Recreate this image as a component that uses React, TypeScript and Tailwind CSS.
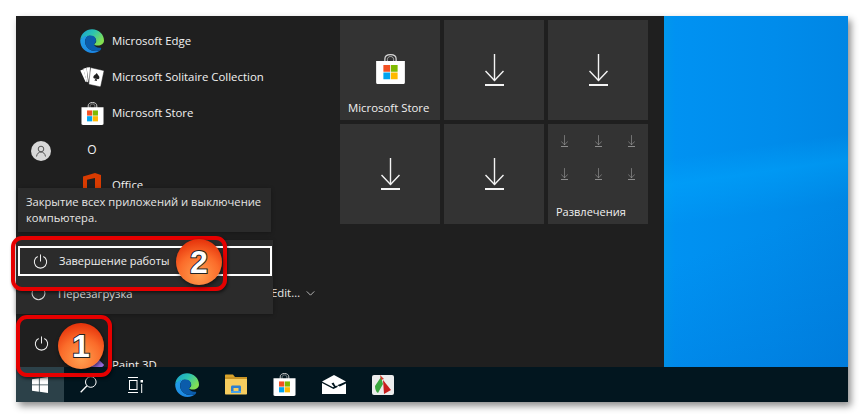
import React from "react";

const font = { fontFamily: '"Open Sans", "Noto Sans", sans-serif' };

function Power({ className = "" }: { className?: string }) {
  return (
    <svg viewBox="0 0 16 16" className={className} fill="none" stroke="currentColor" strokeWidth="1.1">
      <path d="M5 2.6A6.6 6.6 0 1 0 11 2.6" />
      <path d="M8 .5V8" />
    </svg>
  );
}

function Arrow({ className = "" }: { className?: string }) {
  return (
    <svg viewBox="0 0 19 32" className={className} fill="none" stroke="currentColor">
      <path d="M9.5 0V26.5" strokeWidth="1.4" />
      <path d="M.5 17L9.5 26.5L18.5 17" strokeWidth="1.4" />
      <path d="M0 31H19" strokeWidth="2" />
    </svg>
  );
}

function Edge({ id, className = "" }: { id: string; className?: string }) {
  return (
    <svg viewBox="0 0 24 24" className={className}>
      <defs>
        <linearGradient id={id + "a"} x1="0" y1="0" x2="1" y2="0.6">
          <stop offset="0" stopColor="#159ad6" />
          <stop offset="0.5" stopColor="#2cc4b0" />
          <stop offset="1" stopColor="#84e050" />
        </linearGradient>
        <linearGradient id={id + "b"} x1="0" y1="0" x2="1" y2="1">
          <stop offset="0" stopColor="#22a0e8" />
          <stop offset="1" stopColor="#1a7ee0" />
        </linearGradient>
      </defs>
      <path d="M.2 11C1 4.500 6 .2 12 .2C19 .2 24 5.500 24 11.500C24 15 21 16.500 18 16.500C16 16.500 14.500 16 14 15.200C16.500 14 16.800 11.500 15.500 9.500C13.500 6.500 8 6 4.500 8C2.500 9 1 10 .2 11Z" fill={`url(#${id}a)`} />
      <path d="M.2 11C2 8 5.500 6.500 9 6.700C5.800 8 4.800 11 5.300 14C6 18.500 10.500 22 15.500 22C17.500 22 19.500 21.500 21 20.500C19 22.800 15.800 24 12.500 24C5.500 24 0 18.500 .2 11Z" fill={`url(#${id}b)`} />
      <path d="M9 6.700C12 6 14.800 7.200 15.700 9.700C16.500 12 15.500 14 14 15.200C14.500 17.500 17 19 20 18.800C21 18.700 21.500 19.200 21 20.500C19.500 21.500 17.500 22 15.500 22C10.500 22 6 18.500 5.300 14C4.800 11 5.800 8 9 6.700Z" fill="#0b5cab" />
    </svg>
  );
}

function Store({ className = "" }: { className?: string }) {
  return (
    <svg viewBox="0 0 24 24" className={className}>
      <path d="M7.500 7V4C7.500 1.800 9.500 .5 12 .5C14.500 .5 16.500 1.800 16.500 4V7" fill="none" stroke="#d8d8d8" strokeWidth="1" />
      <path d="M9.500 7V4.500C9.500 3 10.500 2 12 2C13.500 2 14.500 3 14.500 4.500V7" fill="none" stroke="#bdbdbd" strokeWidth=".7" />
      <path d="M.5 5.500H23.500V22.500C23.500 23.500 23 24 22 24H2C1 24 .5 23.500 .5 22.500Z" fill="#fff" />
      <rect x="6.300" y="8.800" width="5.400" height="5.400" fill="#f25022" />
      <rect x="12.300" y="8.800" width="5.400" height="5.400" fill="#7fba00" />
      <rect x="6.300" y="14.800" width="5.400" height="5.400" fill="#00a4ef" />
      <rect x="12.300" y="14.800" width="5.400" height="5.400" fill="#ffb900" />
    </svg>
  );
}

function Cards({ className = "" }: { className?: string }) {
  return (
    <svg viewBox="0 0 24 20" className={className} fill="#fff">
      <path d="M.3 3.500L3.500 2.300L6.800 14.500L5.600 15Z" />
      <path d="M3.200 1.800L6.500 .8L8 14.500L7 15.500Z" />
      <path d="M6.500 .5L10 .2L10.800 15.500L8.800 15.500Z" />
      <path d="M10.500 .5L23.500 3.500C24 3.700 24 4 23.900 4.500L20.800 19C20.600 19.600 20.300 19.800 19.800 19.700L9.500 17.500C9 17.400 8.700 17 8.800 16.500Z" stroke="#1f1f1f" strokeWidth=".5" />
      <path d="M16.800 6C17.800 8 20 9.300 19.300 11.200C18.800 12.400 17.300 12.400 16.500 11.600L17 14L14.400 13.400L15.800 11.400C14.800 11.900 13.300 11.400 13.300 10C13.400 8.200 15.500 8 16.800 6Z" fill="#1f1f1f" />
    </svg>
  );
}

function Office({ className = "" }: { className?: string }) {
  return (
    <svg viewBox="0 0 18 24" className={className}>
      <path d="M0 3.500L12 0L18 2V22L12 24L0 20.500L12 22V5L4 6.800V18L0 20.500Z" fill="#d83b01" />
    </svg>
  );
}

function Windows({ className = "" }: { className?: string }) {
  return (
    <svg viewBox="0 0 16 16" className={className} fill="#fff">
      <path d="M0 2.300L6.900 1.300V7.500H0Z" />
      <path d="M7.700 1.200L16 0V7.500H7.700Z" />
      <path d="M0 8.300H6.900V14.700L0 13.700Z" />
      <path d="M7.700 8.300H16V16L7.700 14.800Z" />
    </svg>
  );
}

function Search({ className = "" }: { className?: string }) {
  return (
    <svg viewBox="0 0 17 17" className={className} fill="none" stroke="#fff">
      <circle cx="10.800" cy="6" r="5.300" strokeWidth="1" />
      <path d="M7 9.800L.7 16.300" strokeWidth="1.300" />
    </svg>
  );
}

function TaskView({ className = "" }: { className?: string }) {
  return (
    <svg viewBox="0 0 16 16" className={className} fill="none" stroke="#fff" strokeWidth="1">
      <path d="M0 .5H10M0 15.500H10" />
      <rect x="1.500" y="3.500" width="7.500" height="9" />
      <rect x="12.500" y="3" width="2.500" height="2.500" fill="#fff" stroke="none" />
      <path d="M13.700 7V16" />
    </svg>
  );
}

function Folder({ className = "" }: { className?: string }) {
  return (
    <svg viewBox="0 0 22 20" className={className}>
      <path d="M0 1C0 .4.400 0 1 0H8L10 2.500H0Z" fill="#d9a42c" />
      <rect x="0" y="2.500" width="22" height="2" fill="#c99526" />
      <path d="M0 4.500H22V19C22 19.600 21.600 20 21 20H1C.4 20 0 19.600 0 19Z" fill="#f6cd5f" />
      <path d="M6 16.500V12.500C6 11.700 6.500 11 7.500 11H14.500C15.500 11 16 11.700 16 12.500V16.500H13.500V13.500H8.500V16.500Z" fill="#2b7fd1" />
      <rect x="6" y="16.500" width="10" height="2" fill="#4aa3e8" />
    </svg>
  );
}

function Mail({ className = "" }: { className?: string }) {
  return (
    <svg viewBox="0 0 24 19" className={className}>
      <path d="M0 6.500L12 0L24 6.500L13.500 11L11.500 7.500L9.500 8.500L12 11.800L11 12.300Z" fill="#fff" />
      <path d="M0 8L11.500 14L16 11.800L12 8.800L17.800 11.500L24 8.500V19H0Z" fill="#fff" />
    </svg>
  );
}

function Capture({ className = "" }: { className?: string }) {
  return (
    <svg viewBox="0 0 22 20" className={className}>
      <rect x="0" y="0" width="22" height="20" rx="2" fill="#ececec" />
      <path d="M9 2L3 11C3 14 4 17 6 18L11 9Z" fill="#3aa83f" />
      <path d="M11 5L19 15L12 19Z" fill="#c81e1e" />
      <path d="M8 0L12 4L9 5Z" fill="#d03a2a" />
    </svg>
  );
}

function Paint3D({ className = "" }: { className?: string }) {
  return (
    <svg viewBox="0 0 24 24" className={className}>
      <path d="M0 12L12 0L24 12L12 24Z" fill="#5c4bc4" />
      <path d="M12 0L24 12L12 24Z" fill="#9a6de0" />
    </svg>
  );
}

function AppRow({ icon, label }: { icon?: React.ReactNode; label?: string }) {
  return (
    <div className="flex h-9 shrink-0 items-center">
      <div className="flex w-6 justify-center">{icon}</div>
      <span className="ml-2 text-[11.4px] leading-none text-[#f2f2f2]">{label}</span>
    </div>
  );
}

function DownloadTile() {
  return (
    <div className="flex h-[100px] items-center justify-center bg-[#333333] pb-[1px]">
      <Arrow className="h-8 w-[19px] text-[#f4f4f4]" />
    </div>
  );
}

function Badge({ n, className }: { n: string; className: string }) {
  return (
    <div
      className={
        "absolute flex h-[46px] w-[46px] items-center justify-center rounded-full bg-[radial-gradient(circle_at_50%_78%,#ffa050_0%,#fb6c2a_48%,#e8380e_80%,#c8240a_100%)] text-[32px] font-bold leading-none text-white shadow-[1px_2px_4px_rgba(0,0,0,0.6)] [-webkit-text-stroke:2px_#222] " +
        className
      }
      style={{ fontFamily: '"Liberation Sans", sans-serif', paintOrder: "stroke fill" }}
    >
      {n}
    </div>
  );
}

export default function App() {
  return (
    <div className="h-[418px] w-[864px] overflow-hidden bg-white p-4" style={font}>
      <div className="relative flex h-[386px] w-[832px] flex-col shadow-[3px_4px_7px_rgba(0,0,0,0.45)]">
        <div className="flex h-[351px] overflow-hidden">
          {/* Start menu */}
          <div className="flex w-[648px] bg-[#1f1f1f]">
            <div className="flex w-12 flex-col items-center pl-[2px]">
              <div className="mt-[125px] flex h-5 w-5 items-center justify-center rounded-full bg-[#d8d8d8] text-[#555]">
                <svg viewBox="0 0 12 12" className="h-3 w-3" fill="none" stroke="currentColor" strokeWidth="1">
                  <circle cx="6" cy="4" r="2.800" />
                  <path d="M1.500 11.500C2 8.500 3.800 7 6 7C8.200 7 10 8.500 10.500 11.500" />
                </svg>
              </div>
              <Power className="mt-[175px] h-[15px] w-[15px] text-[#eeeeee]" />
            </div>
            <div className="flex w-[276px] flex-col pl-4 pt-[7px]">
              <AppRow icon={<Edge id="e1" className="h-6 w-6" />} label="Microsoft Edge" />
              <AppRow icon={<Cards className="h-5 w-6" />} label="Microsoft Solitaire Collection" />
              <AppRow icon={<Store className="h-[23px] w-[23px]" />} label="Microsoft Store" />
              <div className="flex h-9 shrink-0 items-center pt-[2px]">
                <span className="w-6 text-center text-[12px] text-[#f2f2f2]">O</span>
              </div>
              <AppRow icon={<Office className="h-6 w-[18px]" />} label="Office" />
              <AppRow />
              <AppRow />
              <div className="flex h-9 shrink-0 items-center">
                <span className="w-[220px] text-right text-[11.4px] text-[#e8e8e8]">Adobe Edit…</span>
                <svg viewBox="0 0 10 6" className="ml-[6px] h-[5px] w-[9px]" fill="none" stroke="#d0d0d0" strokeWidth="1">
                  <path d="M.5.5L5 5L9.500.5" />
                </svg>
              </div>
              <AppRow />
              <AppRow icon={<Paint3D className="h-6 w-6" />} label="Paint 3D" />
            </div>
            <div className="grid h-[204px] flex-1 grid-cols-[100px_100px_100px] gap-1 pt-1">
              <div className="flex h-[100px] flex-col bg-[#333333]">
                <div className="flex justify-center pt-[34px]">
                  <Store className="h-[30px] w-[31px]" />
                </div>
                <span className="ml-2 mt-[18px] text-[11.4px] leading-none text-[#f0f0f0]">Microsoft Store</span>
              </div>
              <DownloadTile />
              <DownloadTile />
              <DownloadTile />
              <DownloadTile />
              <div className="flex h-[100px] flex-col bg-[#333333]">
                <div className="grid grid-cols-[33.5px_33.5px_33.5px] gap-y-[21px] pt-[11px] pl-[13px]">
                  {[0, 1, 2, 3, 4, 5].map((i) => (
                    <Arrow key={i} className="h-3 w-[7px] text-[#b0b0b0]" />
                  ))}
                </div>
                <span className="ml-2 mt-[26px] text-[11px] leading-none text-[#f0f0f0]">Развлечения</span>
              </div>
            </div>
          </div>
          {/* Desktop */}
          <div className="flex-1 bg-[linear-gradient(172deg,transparent_38%,rgba(0,170,255,0.4)_45%,transparent_56%),linear-gradient(160deg,transparent_60%,rgba(0,100,200,0.3)_100%),linear-gradient(90deg,#0098ec_0%,#0092f2_6%,#008ceb_60%,#0086e4_100%)]" />
        </div>

        {/* Taskbar */}
        <div className="flex h-[35px] items-center bg-[#02161f]">
          <div className="flex h-full w-12 items-center justify-center bg-[#2c4149]">
            <Windows className="h-4 w-4" />
          </div>
          <div className="flex w-12 justify-center">
            <Search className="h-[17px] w-[17px]" />
          </div>
          <div className="flex w-12 justify-center">
            <TaskView className="h-4 w-4" />
          </div>
          <div className="ml-[3px] flex w-12 justify-center">
            <Edge id="e2" className="h-6 w-6" />
          </div>
          <div className="flex w-[49px] justify-center">
            <Folder className="h-[21px] w-[22px]" />
          </div>
          <div className="flex w-[49px] justify-center">
            <Store className="h-[23px] w-[23px]" />
          </div>
          <div className="flex w-[49px] justify-center">
            <Mail className="h-[19px] w-6" />
          </div>
          <div className="flex w-[49px] justify-center">
            <Capture className="h-[20px] w-[22px]" />
          </div>
        </div>

        {/* Power tooltip */}
        <div className="absolute left-[2px] top-[172px] h-[44px] w-[253px] bg-[#2b2b2b] pl-2 pt-[6px] text-[11.2px] leading-[16px] text-[#e6e6e6] shadow-[0_1px_4px_rgba(0,0,0,0.3)]">
          Закрытие всех приложений и выключение
          <br />
          компьютера.
        </div>

        {/* Power flyout */}
        <div className="absolute left-0 top-[224px] flex h-[74px] w-[257px] flex-col bg-[#2b2b2b] pl-[2px] pt-[6px] shadow-[0_1px_4px_rgba(0,0,0,0.3)]">
          <div className="flex h-[30px] w-[254px] items-center border-2 border-white pl-[13px] text-[11px] text-[#f0f0f0]">
            <Power className="h-[15px] w-[15px]" />
            <span className="ml-[11px]">Завершение работы</span>
          </div>
          <div className="flex h-[36px] items-center pl-[14px] text-[11.3px] text-[#d8d8d8]">
            <Power className="h-[15px] w-[15px] opacity-0" />
            <span className="ml-[11px]">Перезагрузка</span>
          </div>
        </div>
        <svg viewBox="0 0 16 16" className="absolute left-[15px] top-[271px] h-[15px] w-[15px] text-[#d8d8d8]" fill="none" stroke="currentColor" strokeWidth="1.100">
          <path d="M2 3.500A6.800 6.800 0 1 0 14 3.500" />
        </svg>

        {/* Annotations */}
        <div className="absolute left-[-5px] top-[220px] h-[55px] w-[216px] rounded-[11px] border-4 border-[#e60000] shadow-[1px_2px_3px_rgba(0,0,0,0.5)]" />
        <div className="absolute left-0 top-[299px] h-[62px] w-[96px] rounded-[11px] border-4 border-[#e60000] shadow-[1px_2px_3px_rgba(0,0,0,0.5)]" />
        <Badge n="2" className="left-[160px] top-[223px]" />
        <Badge n="1" className="left-[42px] top-[307px]" />
      </div>
    </div>
  );
}
